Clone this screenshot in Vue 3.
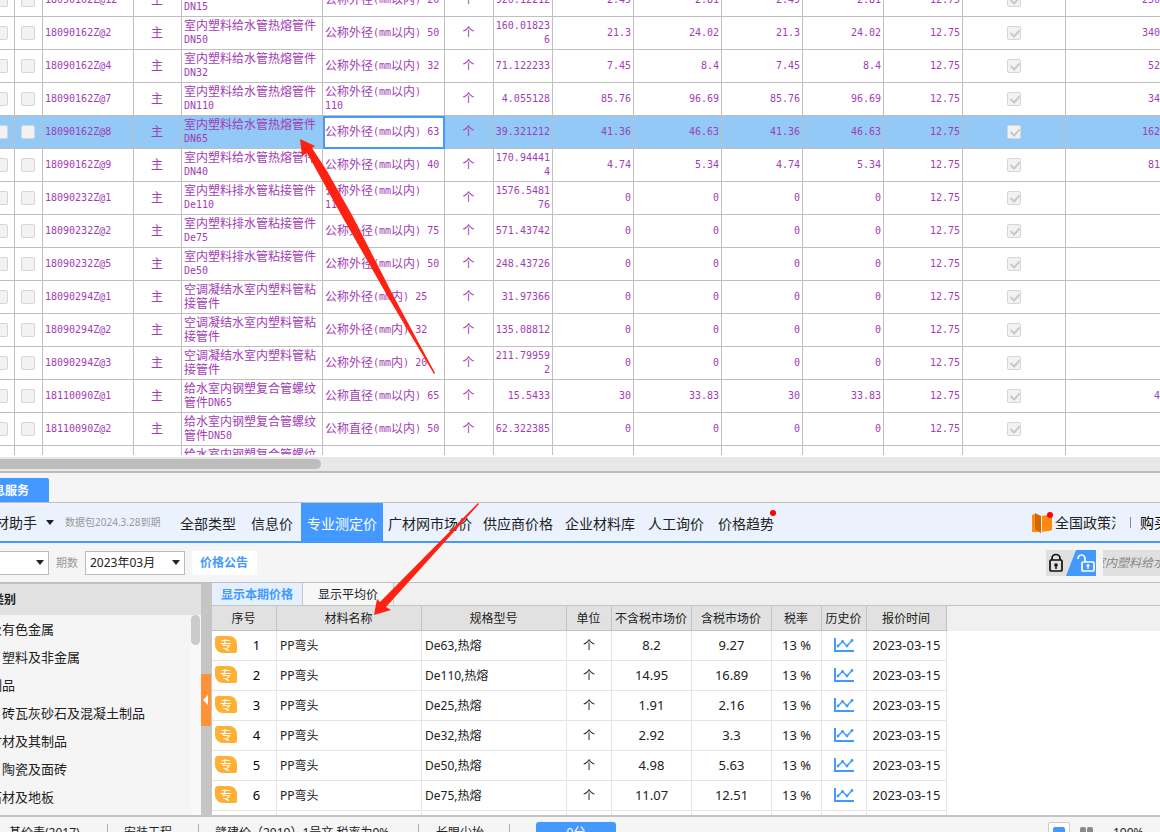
<script setup>
import { ref } from 'vue'

const materials = [
  ['18090162Z@12', '室内塑料给水管热熔管件DN15', '公称外径(mm以内) 20', '920.12212', '2.49', '2.81', '250'],
  ['18090162Z@2', '室内塑料给水管热熔管件DN50', '公称外径(mm以内) 50', '160.018236', '21.3', '24.02', '340'],
  ['18090162Z@4', '室内塑料给水管热熔管件DN32', '公称外径(mm以内) 32', '71.122233', '7.45', '8.4', '52'],
  ['18090162Z@7', '室内塑料给水管热熔管件DN110', '公称外径(mm以内) 110', '4.055128', '85.76', '96.69', '34'],
  ['18090162Z@8', '室内塑料给水管热熔管件DN65', '公称外径(mm以内) 63', '39.321212', '41.36', '46.63', '162'],
  ['18090162Z@9', '室内塑料给水管热熔管件DN40', '公称外径(mm以内) 40', '170.944414', '4.74', '5.34', '81'],
  ['18090232Z@1', '室内塑料排水管粘接管件De110', '公称外径(mm以内) 110', '1576.548176', '0', '0', ''],
  ['18090232Z@2', '室内塑料排水管粘接管件De75', '公称外径(mm以内) 75', '571.43742', '0', '0', ''],
  ['18090232Z@5', '室内塑料排水管粘接管件De50', '公称外径(mm以内) 50', '248.43726', '0', '0', ''],
  ['18090294Z@1', '空调凝结水室内塑料管粘接管件', '公称外径(mm内) 25', '31.97366', '0', '0', ''],
  ['18090294Z@2', '空调凝结水室内塑料管粘接管件', '公称外径(mm内) 32', '135.08812', '0', '0', ''],
  ['18090294Z@3', '空调凝结水室内塑料管粘接管件', '公称外径(mm内) 20', '211.799592', '0', '0', ''],
  ['18110090Z@1', '给水室内钢塑复合管螺纹管件DN65', '公称直径(mm以内) 65', '15.5433', '30', '33.83', '4'],
  ['18110090Z@2', '给水室内钢塑复合管螺纹管件DN50', '公称直径(mm以内) 50', '62.322385', '0', '0', ''],
  ['18110090Z@3', '给水室内钢塑复合管螺纹管件DN40', '公称直径(mm以内) 40', '48.2214', '0', '0', '']
].map(([code, name, spec, qty, net, gross, total]) => ({
  code, name, spec, qty, total, prices: [net, gross, net, gross, '12.75']
}))

const selected = ref(4)

// Half-width runs use a narrower monospace face than the ideographs around them.
const runs = (text) =>
  (text.match(/[\x20-\x7e]+|[^\x20-\x7e]+/g) || []).map((t) => ({ t, half: /^[\x20-\x7e]/.test(t) }))

const navItems = ['全部类型', '信息价', '专业测定价', '广材网市场价', '供应商价格', '企业材料库', '人工询价', '价格趋势']
const activeNav = ref(2)

const categories = [
  '黑色及有色金属', '橡胶、塑料及非金属', '五金制品', '水泥、砖瓦灰砂石及混凝土制品',
  '木、竹材及其制品', '玻璃、陶瓷及面砖', '装饰石材及地板'
]

const quotes = [
  ['De63,热熔', '8.2', '9.27'],
  ['De110,热熔', '14.95', '16.89'],
  ['De25,热熔', '1.91', '2.16'],
  ['De32,热熔', '2.92', '3.3'],
  ['De50,热熔', '4.98', '5.63'],
  ['De75,热熔', '11.07', '12.51'],
  ['De90,热熔', '18.45', '20.85']
]
</script>

<template>
  <div class="app">
    <section class="materials">
      <div class="grid-view">
        <table class="grid">
          <colgroup>
            <col class="c15" /><col class="c28" /><col class="c91" /><col class="c48" /><col class="c141" />
            <col class="c122" /><col class="c49" /><col class="c59" /><col class="c81" /><col class="c88" />
            <col class="c81" /><col class="c81" /><col class="c79" /><col class="c103" /><col />
          </colgroup>
          <tbody>
            <tr v-for="(m, i) in materials" :key="i" :class="{ selected: i === selected }" @click="selected = i">
              <td class="edge"><input type="checkbox" class="box" :aria-label="'标记 ' + m.code" /></td>
              <td class="mid"><input type="checkbox" class="box" :aria-label="'选择 ' + m.code" /></td>
              <td><span class="half">{{ m.code }}</span></td>
              <td class="mid">主</td>
              <td><span v-for="(r, k) in runs(m.name)" :key="k" :class="{ half: r.half }">{{ r.t }}</span></td>
              <td :class="{ editing: i === selected }"><span v-for="(r, k) in runs(m.spec)" :key="k" :class="{ half: r.half }">{{ r.t }}</span></td>
              <td class="mid">个</td>
              <td class="num qty"><span class="half">{{ m.qty }}</span></td>
              <td v-for="(p, k) in m.prices" :key="'p' + k" class="num"><span class="half">{{ p }}</span></td>
              <td class="mid"><input type="checkbox" class="box" checked disabled :aria-label="'启用 ' + m.code" /></td>
              <td class="num last"><span class="half">{{ m.total }}</span></td>
            </tr>
          </tbody>
        </table>
      </div>
      <div class="hscroll"><div class="hthumb"></div></div>
    </section>

    <section class="service">
      <div class="service-tabs"><button class="service-tab">信息服务</button></div>

      <nav class="nav">
        <button class="assistant">广材助手</button>
        <svg class="caret" viewBox="0 0 8 5"><path d="M0 0h8L4 5z" /></svg>
        <span class="expiry">数据包2024.3.28到期</span>
        <a v-for="(n, i) in navItems" :key="n" href="#" :class="['nav-item', 'n' + i, { active: i === activeNav }]" @click.prevent="activeNav = i">{{ n }}<i v-if="i === 7" class="dot"></i></a>
        <div class="nav-right">
          <svg class="book" width="22" height="22" viewBox="0 0 22 22">
            <path d="M1 4l3-1v18l-3-1z" fill="#ff8a12" /><path d="M4 2l6 3v17l-6-3z" fill="#d26700" />
            <path d="M4 19l6 2H1v-2z" fill="#ff8a12" /><path d="M11 5l10-2v16l-3 1h-2l-5 1z" fill="#ff8a12" />
            <circle cx="19" cy="4" r="3" fill="#f00" />
          </svg>
          <a href="#" class="policy">全国政策法规</a>
          <i class="bar"></i>
          <a href="#" class="buy">购买</a>
        </div>
      </nav>

      <div class="filters">
        <span class="pick region"><select aria-label="地区"><option></option></select><svg class="caret" viewBox="0 0 8 5"><path d="M0 0h8L4 5z" /></svg></span>
        <label for="period">期数</label>
        <span class="pick period"><select id="period"><option>2023年03月</option></select><svg class="caret" viewBox="0 0 8 5"><path d="M0 0h8L4 5z" /></svg></span>
        <button class="notice">价格公告</button>
        <button class="locks" aria-label="锁定">
          <svg width="50" height="26" viewBox="0 0 50 26" fill="none">
            <path d="M0 0h50v26H0z" fill="#e0e0e0" /><path d="M30 0h20v26H20z" fill="#4399ff" />
            <path d="M6 10V8.500a4 4 0 0 1 8 0V10" stroke="#111" stroke-width="1.700" />
            <rect x="4" y="10" width="12" height="11" rx="1" stroke="#111" stroke-width="1.700" />
            <circle cx="10" cy="15" r="1.800" fill="#111" /><path d="M9.300 15h1.400v4H9.300z" fill="#111" />
            <path d="M32 9V8.500a3.500 3.500 0 0 1 7 0V12" stroke="#fff" stroke-width="1.700" />
            <rect x="36" y="12" width="12" height="9" rx="1" stroke="#fff" stroke-width="1.700" />
            <circle cx="42" cy="15.500" r="1.500" fill="#fff" /><path d="M41.400 16h1.200v3h-1.200z" fill="#fff" />
          </svg>
        </button>
        <input class="search" type="text" placeholder="室内塑料给水管热熔管件" aria-label="搜索材料" />
      </div>

      <div class="panes">
        <aside class="side">
          <h2>材料类别</h2>
          <div class="side-body">
            <ul><li v-for="c in categories" :key="c">{{ c }}</li></ul>
            <div class="vscroll"><div class="vthumb"></div></div>
          </div>
        </aside>
        <div class="splitter">
          <button class="collapse" aria-label="收起"><svg width="5" height="10" viewBox="0 0 5 10"><path d="M5 0v10L0 5z" fill="#fff" /></svg></button>
        </div>
        <div class="prices">
          <div class="view-tabs">
            <button class="on">显示本期价格</button><button>显示平均价</button>
          </div>
          <div class="quote-view">
            <table class="quotes">
              <colgroup>
                <col class="c65" /><col class="c145" /><col class="c145" /><col class="c45" /><col class="c80" />
                <col class="c80" /><col class="c50" /><col class="c45" /><col class="c80" />
              </colgroup>
              <thead>
                <tr>
                  <th>序号</th><th>材料名称</th><th>规格型号</th><th>单位</th><th>不含税市场价</th>
                  <th>含税市场价</th><th>税率</th><th>历史价</th><th>报价时间</th>
                </tr>
              </thead>
              <tbody>
                <tr v-for="(q, i) in quotes" :key="q[0]">
                  <td class="seq"><div><b>专</b><span>{{ i + 1 }}</span></div></td>
                  <td class="txt">PP弯头</td>
                  <td class="txt">{{ q[0] }}</td>
                  <td class="unit">个</td>
                  <td>{{ q[1] }}</td>
                  <td>{{ q[2] }}</td>
                  <td>13 %</td>
                  <td>
                    <svg class="chart" width="20" height="14" viewBox="0 0 20 14" fill="none" stroke="#4399ff">
                      <path d="M1 0v13h19" stroke-width="2" />
                      <path d="M4 8l4.500-4.500L13 8l5-5.500" stroke-width="1.500" />
                      <g fill="#4399ff" stroke="none"><circle cx="4" cy="8" r="1.400" /><circle cx="8.500" cy="3.500" r="1.400" /><circle cx="13" cy="8" r="1.400" /><circle cx="18" cy="2.500" r="1.400" /></g>
                    </svg>
                  </td>
                  <td>2023-03-15</td>
                </tr>
              </tbody>
            </table>
          </div>
        </div>
      </div>
    </section>

    <footer class="status">
      <div class="status-row">
        <span class="s1">基价表(2017)</span>
        <span class="s2">安装工程</span>
        <span class="s3">赣建价（2019）1号文 税率为9%</span>
        <span class="s4">长眼少抬</span>
        <button class="score">0分</button>
        <div class="zoom">
          <button class="single" aria-label="单栏"><i></i></button>
          <button class="double" aria-label="双栏"><i></i><i></i></button>
          <span>100%</span>
          <button class="minus" aria-label="缩小"></button>
        </div>
      </div>
    </footer>

    <svg class="arrows" width="1160" height="832" viewBox="0 0 1160 832" fill="#ff2112">
      <path d="M300 139L315 146L312 148L327 171L352 215L394 297L435 373L434 374L388 297L343 218L307 153L302 156Z" />
      <path d="M374 615L377 599L380 602L478 503L479 504L386 607L391 610Z" />
    </svg>
  </div>
</template>

<style>
body { margin: 0; overflow: hidden; }
</style>

<style scoped>
.app {
  position: relative;
  display: grid;
  grid-template-rows: 473px minmax(0, 1fr) 17px;
  height: 100vh;
  overflow: hidden;
  background: #f5f5f5;
  color: #222;
  font: 12px/16px "Noto Sans", "Noto Sans CJK SC", sans-serif;
}
.app * { box-sizing: border-box; }
button { margin: 0; padding: 0; border: 0; background: none; color: inherit; font: inherit; white-space: nowrap; }
a { color: inherit; text-decoration: none; }

.materials { display: flex; flex-direction: column; min-height: 0; background: #fff; border-bottom: 2px solid #bbb; }
.grid-view { flex: 1; min-height: 0; overflow: hidden; margin-bottom: 2px; }
.grid { width: 100%; margin-top: -16px; table-layout: fixed; border-collapse: separate; border-spacing: 0; }
.grid tr { height: 33px; }
.grid td {
  height: 33px; padding: 0 2px 2px; border-right: 1px solid #bfbfbf; border-bottom: 1px solid #bfbfbf;
  color: #a23cb6; font: 12px/14px "Noto Sans CJK SC", sans-serif; vertical-align: middle; overflow: hidden;
}
.grid .half { font-family: "DejaVu Sans Mono", monospace; font-size: 10px; line-height: 0; vertical-align: 1px; }
.grid .mid { text-align: center; padding: 0 1px 2px 0; }
.grid .num { text-align: right; }
.grid .qty { padding-left: 1px; word-break: break-all; }
.grid .last { padding-right: 0; border-right: 0; }
.grid .edge { padding-left: 0; }
.grid .edge .box { margin-left: -6px; }
.selected td { background: #92c9f7; }
.grid .editing { background: #fff; outline: 2px solid #4399ff; outline-offset: -2px; }
.box {
  appearance: none; display: inline-block; position: relative; width: 14px; height: 14px; margin: 2px 0 0;
  border: 1px solid #d6d6d6; border-radius: 2px; background: #f2f2f2; vertical-align: middle;
}
.box:checked::after {
  content: ""; position: absolute; left: 4px; top: 1px; width: 4px; height: 7px;
  border: solid #c8c8c8; border-width: 0 2px 2px 0; transform: rotate(42deg);
}
.hscroll { height: 14px; padding: 2px 0; background: #e8e8e8; }
.hthumb { width: 321px; height: 10px; background: #bdbdbd; border-radius: 0 5px 5px 0; }

.c15 { width: 15px; } .c28 { width: 28px; } .c91 { width: 91px; } .c48 { width: 48px; } .c141 { width: 141px; }
.c122 { width: 122px; } .c49 { width: 49px; } .c59 { width: 59px; } .c81 { width: 81px; } .c88 { width: 88px; }
.c79 { width: 79px; } .c103 { width: 103px; } .c65 { width: 65px; } .c145 { width: 145px; } .c45 { width: 45px; }
.c80 { width: 80px; } .c50 { width: 50px; }

.service { display: flex; flex-direction: column; min-height: 0; min-width: 0; }
.service-tabs { display: flex; align-items: flex-end; height: 30px; border-bottom: 1px solid #c0c0c0; }
.service-tab { height: 24px; margin-left: -19px; padding: 2px 20px 0 0; background: #4399ff; color: #fff; font-weight: bold; border-radius: 0 2px 0 0; }

.nav { display: flex; align-items: center; height: 40px; background: #ebf2fe; border-bottom: 2px solid #4399ff; font-size: 14px; white-space: nowrap; overflow: hidden; }
.assistant { margin-left: -19px; padding-top: 2px; }
.caret { width: 8px; height: 5px; fill: #222; }
.nav .caret { margin-left: 9px; flex: none; }
.expiry { width: 96px; margin: 0 12px 0 11px; color: #999; font-size: 10px; }
.nav-item { position: relative; height: 38px; padding: 2px 7px 0; line-height: 38px; }
.nav .n1 { padding: 2px 8px 0; }
.nav .n2 { padding: 2px 6px 0; }
.nav-item.active { background: #4399ff; color: #fff; }
.nav .n3 { padding: 2px 5px 0; }
.nav .n4 { padding: 2px 6px 0; }
.nav .n5 { padding: 2px 6px 0; }
.dot { position: absolute; right: 5px; top: 7px; width: 6px; height: 6px; border-radius: 50%; background: #f00; }
.nav-right { display: flex; align-items: center; width: 129px; margin-left: auto; }
.book { flex: none; }
.policy { width: 61px; margin: 2px 0 0 2px; flex: none; overflow: hidden; }
.bar { flex: none; width: 1px; height: 11px; margin: 0 9px 0 14px; background: #888; }
.buy { margin-top: 2px; color: #000; }

.filters { display: flex; align-items: center; height: 39px; overflow: hidden; }
.pick { position: relative; height: 24px; }
.pick select { appearance: none; width: 100%; height: 24px; padding: 0 4px; border: 1px solid #bbb; border-radius: 0; background: #fff; color: #222; font: inherit; }
.pick .caret { position: absolute; right: 5px; top: 9px; }
.region { width: 50px; margin-left: -1px; }
.filters label { margin: 0 7px; color: #999; font-size: 11px; }
.period { width: 100px; }
.notice { height: 24px; margin-left: 7px; padding: 0 9px 0 8px; background: #fff; color: #4399ff; font-weight: bold; }
.locks { height: 26px; margin: 0 7px 0 auto; }
.locks svg { display: block; }
.search { width: 57px; height: 26px; padding: 0; border: 0; border-radius: 0; background: #e0e0e0; font: italic 12px "Noto Sans", "Noto Sans CJK SC", sans-serif; text-indent: -10px; }
.search::placeholder { color: #888; opacity: 1; }

.panes { display: flex; flex: 1; min-height: 0; border-top: 1px solid #bfbfbf; }
.side { display: flex; flex-direction: column; width: 201px; border-top: 1px solid #bfbfbf; }
.side h2 { height: 31px; margin: 0; background: #e1e1e1; font-size: 12px; line-height: 31px; text-indent: -32px; }
.side-body { display: flex; flex: 1; min-height: 0; overflow: hidden; }
.side ul { flex: 1; margin: 0 0 0 -37px; padding: 0; list-style: none; font-size: 13px; white-space: nowrap; }
.side li { height: 28px; line-height: 28px; }
.vscroll { width: 10px; background: #f8f8f8; }
.vthumb { width: 9px; height: 30px; border-radius: 5px; background: #cbcbcb; }
.splitter { display: flex; align-items: center; width: 11px; padding-top: 2px; background: #c6c5c3; }
.collapse { display: flex; align-items: center; width: 10px; height: 52px; padding-left: 2px; background: #ff9238; }

.prices { display: flex; flex-direction: column; flex: 1; min-width: 0; background: #fff; }
.view-tabs { display: flex; flex: none; height: 23px; background: #f0f0f0; border-bottom: 1px solid #c3c3c3; }
.view-tabs button { height: 22px; padding: 2px 15px 0; border-right: 1px solid #c8c8c8; background: #f7f7f7; }
.view-tabs .on { padding: 2px 9px 0; background: #e5f0fe; color: #4399ff; font-weight: bold; }
.quote-view { flex: 1; min-height: 0; overflow: hidden; background: linear-gradient(#f0f0f0 25px, #fff 25px); }
.quotes { width: 735px; table-layout: fixed; border-collapse: separate; border-spacing: 0; }
.quotes th { height: 25px; padding: 2px 1px 0 0; background: #e1e1e1; border-right: 1px solid #c3c3c3; border-bottom: 1px solid #c3c3c3; font-weight: normal; white-space: nowrap; }
.quotes td { height: 30px; padding: 0 0 2px; background: #fff; border-right: 1px solid #e5e5e5; border-bottom: 1px solid #e5e5e5; text-align: center; font-size: 13px; }
.quotes .txt { padding: 0 0 0 3px; text-align: left; font-size: 12px; }
.quotes .unit { padding: 0; font-size: 12px; }
.seq div { display: flex; align-items: center; padding-left: 3px; color: #000; }
.seq b { width: 22px; height: 17px; background: #ffb033; border-radius: 3px 8px 2px 8px; color: #fff; font: 12px/17px "Noto Sans CJK SC", sans-serif; }
.seq span { width: 39px; }
.chart { display: block; margin: 0 auto; }

.status { border-top: 2px solid #c4c4c4; background: #f5f5f5; overflow: hidden; }
.status-row { display: flex; align-items: center; height: 32px; white-space: nowrap; }
.status-row > span { flex: none; line-height: 18px; border-right: 1px solid #a8b0bf; }
.s1 { width: 108px; padding-left: 9px; }
.s2 { width: 91px; padding-left: 16px; }
.s3 { width: 220px; padding-left: 16px; }
.s4 { width: 91px; padding-left: 17px; }
.score { width: 80px; height: 22px; margin-left: 26px; border-radius: 3px; background: #4399ff; color: #fff; }
.zoom { display: flex; align-items: center; width: 112px; margin-left: auto; }
.single { width: 22px; height: 22px; padding: 4px; border: 1px solid #ccc; border-radius: 2px; background: #fff; }
.single i { display: block; width: 12px; height: 12px; background: #4399ff; border-radius: 2px; }
.double { display: flex; gap: 1px; margin: 0 20px 0 10px; }
.double i { width: 6px; height: 12px; background: #8a8a8a; border-radius: 2px; }
.minus { width: 10px; height: 2px; margin-left: 12px; background: #555; }

.arrows { position: absolute; left: 0; top: 0; pointer-events: none; }
</style>
